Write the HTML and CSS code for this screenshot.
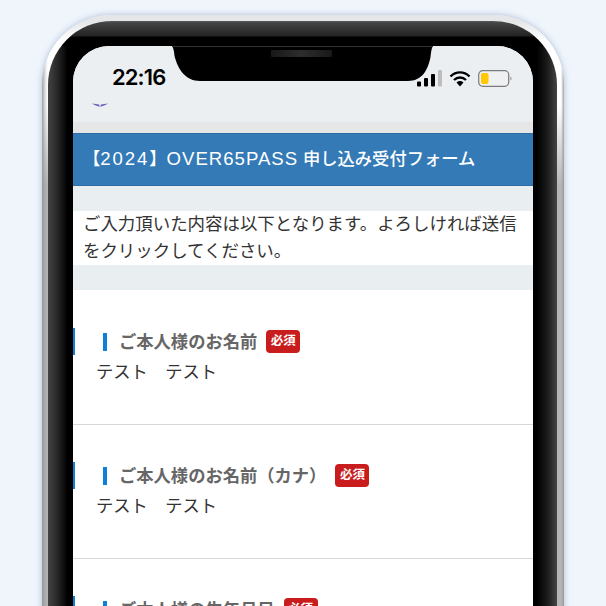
FILE: index.html
```html
<!DOCTYPE html>
<html lang="ja">
<head>
<meta charset="utf-8">
<title>OVER65PASS</title>
<link rel="stylesheet" href="styles.css">
</head>
<body>
<div class="phone">
  <div class="bezel">
    <div class="screen">
      <svg class="notch" width="261" height="36" viewBox="0 0 261 36">
        <path d="M0 0H261C259.500 2 259 6 258.500 11C256 24 250 35 236 35H28C14 35 6 24 2.500 10C2 5 1.500 2 0 0Z" fill="#000"/>
        <path d="M0 .5H261" stroke="#333" stroke-width="1"/>
      </svg>
      <div class="speaker"></div>
      <div class="status">
        <span class="clock">22:16</span>
        <div class="status-icons">
          <svg width="25" height="17" viewBox="0 0 25 17">
            <rect x="0" y="11.500" width="4" height="5" rx="1" fill="#000"/>
            <rect x="7" y="8" width="4" height="8.500" rx="1" fill="#000"/>
            <rect x="14" y="4" width="4" height="12.500" rx="1" fill="#000"/>
            <rect x="21" y="0" width="4" height="16.500" rx="1" fill="#bdbdbd"/>
          </svg>
          <svg class="wifi" width="22" height="17" viewBox="0 0 22 17">
            <path d="M1.500 6.500C7 1 15 1 20.500 6.500M5 10C8.500 6.700 13.500 6.700 17 10" fill="none" stroke="#000" stroke-width="2.400"/>
            <path d="M7.500 12.400C9.800 10.600 12.200 10.600 14.500 12.400L11 16.500Z" fill="#000"/>
          </svg>
          <svg class="battery" width="34" height="17" viewBox="0 0 34 17">
            <rect x=".7" y=".7" width="30" height="15.600" rx="4" fill="#eef0f1" stroke="#7b7b7b" stroke-width="1.200"/>
            <rect x="3" y="3" width="7.500" height="11" rx="2" fill="#ffc800"/>
            <path d="M32.500 6.500C33.800 7 33.800 10 32.500 10.500Z" fill="#7b7b7b"/>
          </svg>
        </div>
      </div>
      <div class="logo-row">
        <svg width="16" height="5" viewBox="0 0 16 5">
          <path d="M0 .5C3 1 5 1 7 1.500L8 4L9 1.500C11 1 13 1 16 .5C13 2.500 11 3 9.500 3.500H6.500C5 3 3 2.500 0 .5Z" fill="#6a63c4"/>
        </svg>
      </div>
      <div class="strip"></div>
      <h1 class="form-title">【<span class="title-digits">2024</span>】<span class="title-latin">OVER65PASS</span> 申し込み受付フォーム</h1>
      <div class="gap-top"></div>
      <p class="intro">ご入力頂いた内容は以下となります。よろしければ送信をクリックしてください。</p>
      <div class="gap-bottom"></div>
      <section class="field">
        <div class="field-head">
          <span class="field-mark"></span>
          <span class="field-name">ご本人様のお名前</span>
          <span class="required">必須</span>
        </div>
        <p class="field-value">テスト　テスト</p>
      </section>
      <section class="field">
        <div class="field-head">
          <span class="field-mark"></span>
          <span class="field-name">ご本人様のお名前（カナ）</span>
          <span class="required">必須</span>
        </div>
        <p class="field-value">テスト　テスト</p>
      </section>
      <section class="field">
        <div class="field-head">
          <span class="field-mark"></span>
          <span class="field-name">ご本人様の生年月日</span>
          <span class="required">必須</span>
        </div>
      </section>
    </div>
  </div>
</div>
</body>
</html>
```
FILE: styles.css
```css
html, body {
  margin: 0;
  height: 606px;
  overflow: hidden;
}
body {
  background: #eff5fb;
  padding: 15px 42px 0;
  box-sizing: border-box;
  font-family: "Liberation Sans", "Noto Sans CJK JP", sans-serif;
  color: #333;
}
.phone {
  height: 760px;
  padding: 6px 7px 0 6px;
  border-radius: 70px;
  background:
    linear-gradient(180deg, #e4e6e8 0, #e4e6e8 6px, transparent 26px),
    linear-gradient(180deg, transparent 90px, rgba(150, 150, 150, .7) 170px),
    linear-gradient(90deg, #a0a0a0 0, #c8c8c8 2px, #ececec 4px, #fff 6px, #fff calc(100% - 7px), #fff calc(100% - 3px), #c4c4c4 calc(100% - 1px), #a0a0a0 100%);
  box-shadow: 0 0 6px rgba(90, 120, 170, .45);
}
.bezel {
  height: 100%;
  padding: 25px 24px 0 25px;
  border-radius: 64px;
  background:
    linear-gradient(180deg, #5a5a5a 0, #444 2px, #222 15px, #000 16px) top / 100% 25px no-repeat,
    linear-gradient(90deg, #444 0, #2c2c2c 8px, #0a0a0a 17px, #000 19px, #000 calc(100% - 20px), #1a1a1a calc(100% - 10px), #444 100%);
}
.screen {
  position: relative;
  height: 100%;
  overflow: hidden;
  border-radius: 36px 36px 0 0;
  background: #fff;
}
.notch {
  position: absolute;
  top: 0;
  left: 99px;
}
.speaker {
  position: absolute;
  top: 4px;
  left: 198px;
  width: 61px;
  height: 7px;
  border-radius: 1px;
  background: linear-gradient(90deg, #181818, #2d2d2d 50%, #181818);
}
.status {
  display: flex;
  align-items: flex-end;
  justify-content: space-between;
  height: 41px;
  padding: 0 21px 0 39px;
  background: #eceff1;
}
.clock {
  font-family: Inter, "Liberation Sans", sans-serif;
  font-size: 22px;
  line-height: 24px;
  font-weight: 600;
  color: #000;
  letter-spacing: -.9px;
  margin-bottom: -2px;
}
.status-icons {
  display: flex;
  align-items: flex-end;
  gap: 7px;
}
.status-icons svg {
  display: block;
}
.logo-row {
  height: 35px;
  padding-left: 19px;
  background: #eceff1;
}
.logo-row svg {
  display: block;
  padding-top: 16px;
}
.strip {
  height: 11px;
  background: #e6e6e6;
}
.form-title {
  margin: 0;
  height: 53px;
  box-sizing: border-box;
  padding: 0 10px;
  border-top: 1px solid #2e6da4;
  border-bottom: 1px solid #2e6da4;
  background: #337ab7;
  color: #fff;
  font-size: 17.3px;
  font-weight: 500;
  line-height: 50px;
  white-space: nowrap;
}
.title-digits {
  font-size: 18.600px;
  letter-spacing: 1.900px;
}
.title-latin {
  font-size: 18.600px;
  letter-spacing: 1px;
}
.gap-top {
  height: 25px;
  background: #e9eef0;
}
.intro {
  margin: 0;
  padding: 0 10px;
  background: #fff;
  font-size: 17.450px;
  line-height: 27px;
}
.gap-bottom {
  height: 25px;
  background: #e9eef0;
}
.field {
  height: 134px;
  box-sizing: border-box;
  padding-top: 37px;
  border-bottom: 1px solid #d8d8d8;
}
.field:first-of-type {
  height: 135px;
  padding-top: 38px;
}
.field-head {
  display: flex;
  align-items: center;
  height: 27px;
  padding-left: 28px;
  border-left: 2px solid #0d80d8;
}
.field-mark {
  width: 4px;
  height: 18px;
  margin-right: 12px;
  background: #0d80d8;
}
.field-name {
  font-size: 17.3px;
  font-weight: 700;
  color: #666;
  white-space: nowrap;
  margin-top: -2px;
}
.required {
  margin-left: 9px;
  width: 34px;
  height: 23px;
  border-radius: 4px;
  background: #c91d1d;
  color: #fff;
  font-size: 12.500px;
  font-weight: 700;
  line-height: 23px;
  text-align: center;
}
.field-value {
  margin: 3px 0 0;
  padding-left: 23px;
  font-size: 17.3px;
  line-height: 29px;
}
```
